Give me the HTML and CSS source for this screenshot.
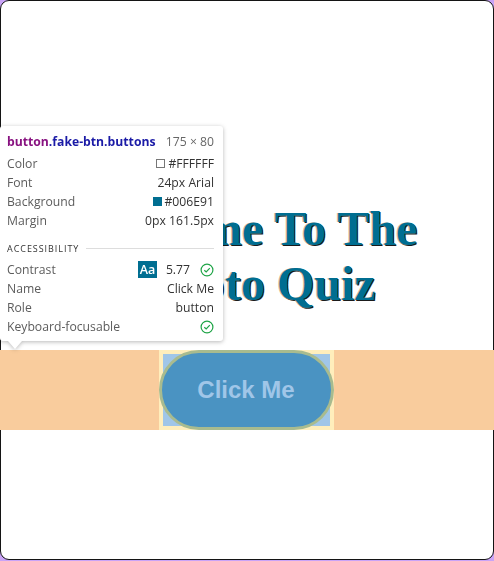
FILE: index.html
```html
<!DOCTYPE html>
<html>
<head>
<meta charset="utf-8">
<link rel="stylesheet" href="styles.css">
</head>
<body>
<div class="frame">
  <h1 class="title">Welcome To The Crypto Quiz</h1>
  <div class="btn-row">
    <div class="hl-box">
      <button class="fake-btn buttons">Click Me</button>
    </div>
  </div>
</div>

<div class="tooltip">
  <div class="tt-head">
    <span class="sel"><span class="tag">button</span><span class="cls">.fake-btn.buttons</span></span>
    <span class="dim">175 × 80</span>
  </div>
  <div class="row"><span class="lbl">Color</span><span class="val"><i class="sw sw-white"></i>#FFFFFF</span></div>
  <div class="row"><span class="lbl">Font</span><span class="val">24px Arial</span></div>
  <div class="row"><span class="lbl">Background</span><span class="val"><i class="sw sw-blue"></i>#006E91</span></div>
  <div class="row"><span class="lbl">Margin</span><span class="val">0px 161.5px</span></div>
  <div class="section"><span>ACCESSIBILITY</span><i class="rule"></i></div>
  <div class="row"><span class="lbl">Contrast</span><span class="val"><b class="aa">Aa</b><span class="ratio">5.77</span><svg class="ok" viewBox="0 0 14 14" width="14" height="14"><circle cx="7" cy="7" r="5.9" fill="none" stroke="#1ea446" stroke-width="1.2"/><path d="M4.3 7.2 L6.2 9 L9.8 5.2" fill="none" stroke="#1ea446" stroke-width="1.2"/></svg></span></div>
  <div class="row"><span class="lbl">Name</span><span class="val">Click Me</span></div>
  <div class="row"><span class="lbl">Role</span><span class="val">button</span></div>
  <div class="row"><span class="lbl">Keyboard-focusable</span><span class="val"><svg class="ok" viewBox="0 0 14 14" width="14" height="14"><circle cx="7" cy="7" r="5.9" fill="none" stroke="#1ea446" stroke-width="1.2"/><path d="M4.3 7.2 L6.2 9 L9.8 5.2" fill="none" stroke="#1ea446" stroke-width="1.2"/></svg></span></div>
</div>
</body>
</html>
```

FILE: styles.css
```css
html, body {
  margin: 0;
  padding: 0;
}
body {
  background: #c9a3f7;
  width: 494px;
  height: 561px;
  position: relative;
  overflow: hidden;
}
.frame {
  box-sizing: border-box;
  width: 494px;
  height: 560px;
  background: #ffffff;
  border: 1px solid #141414;
  border-radius: 9px;
  padding-top: 200px;
}
.title {
  margin: 0 0 39px;
  font-family: "Liberation Serif", "Times New Roman", serif;
  font-size: 48px;
  font-weight: bold;
  line-height: 55px;
  text-align: center;
  color: #006e91;
  text-shadow: -1px 0 0 rgba(214,160,110,0.7), 1px 1px 0 #1b1b1b;
}
.btn-row {
  margin: 0 -1px;
  height: 80px;
  background: #f9cc9d;
  display: flex;
  justify-content: center;
}
.hl-box {
  box-sizing: border-box;
  width: 175px;
  height: 80px;
  margin-left: -2px;
  background: #a0c6e8;
  box-shadow: inset 0 0 0 4px #ffeebc;
  display: flex;
}
.fake-btn {
  box-sizing: border-box;
  width: 100%;
  height: 100%;
  margin: 0;
  padding: 0;
  border: 3px solid #a8bb8f;
  border-radius: 40px;
  background: #4a93c2;
  color: #a0c6e8;
  font-family: "Liberation Sans", Arial, sans-serif;
  font-size: 24px;
  font-weight: bold;
}
.tooltip {
  position: absolute;
  left: 0;
  top: 126px;
  width: 223px;
  box-sizing: border-box;
  padding: 6px 9px 5px 7px;
  background: #fff;
  border-radius: 3px;
  filter: drop-shadow(0 1px 2px rgba(0,0,0,0.28));
  font-family: "Open Sans", "Noto Sans", sans-serif;
  font-size: 12.2px;
  color: #333;
}
.tooltip::after {
  content: "";
  position: absolute;
  left: 8px;
  bottom: -8px;
  border-left: 7px solid transparent;
  border-right: 7px solid transparent;
  border-top: 8px solid #fff;
}
.tt-head {
  display: flex;
  justify-content: space-between;
  line-height: 19px;
  margin-bottom: 3px;
}
.sel {
  font-weight: bold;
}
.tag { color: #881280; }
.cls { color: #1a1aa6; }
.dim { color: #666; }
.row {
  display: flex;
  justify-content: space-between;
  align-items: center;
  height: 19px;
  line-height: 19px;
}
.lbl { color: #5c5c5c; }
.val {
  color: #333;
  display: flex;
  align-items: center;
}
.sw {
  display: inline-block;
  width: 9px;
  height: 9px;
  box-sizing: border-box;
  margin-right: 3px;
}
.sw-white { border: 1px solid #777; background: #fff; }
.sw-blue { background: #006e91; }
.section {
  display: flex;
  align-items: center;
  margin-top: 10px;
  margin-bottom: 4px;
  height: 16px;
  font-size: 9px;
  letter-spacing: 0.95px;
  color: #333;
}
.rule {
  flex: 1;
  height: 1px;
  background: #ddd;
  margin-left: 7px;
}
.aa {
  display: inline-block;
  background: #006e91;
  color: #fff;
  font-weight: 600;
  width: 19px;
  height: 17px;
  line-height: 17px;
  text-align: center;
  font-size: 12.5px;
  margin-right: 9px;
}
.ratio { margin-right: 10px; }
.ok { display: block; }
```
